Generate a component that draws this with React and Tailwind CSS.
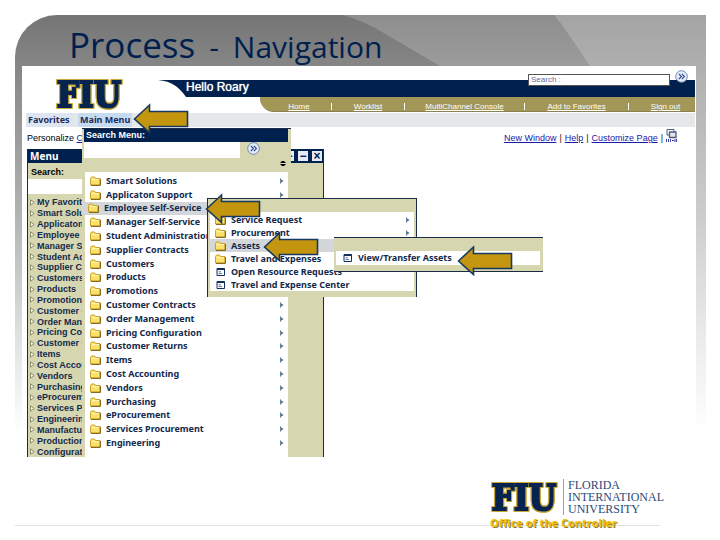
import React from 'react';
import clsx from 'clsx';

const mainMenu = [
  'Smart Solutions',
  'Applicaton Support',
  'Employee Self-Service',
  'Manager Self-Service',
  'Student Administration',
  'Supplier Contracts',
  'Customers',
  'Products',
  'Promotions',
  'Customer Contracts',
  'Order Management',
  'Pricing Configuration',
  'Customer Returns',
  'Items',
  'Cost Accounting',
  'Vendors',
  'Purchasing',
  'eProcurement',
  'Services Procurement',
  'Engineering',
];

const sideMenu = [
  'My Favorite',
  'Smart Solu',
  'Applicaton',
  'Employee S',
  'Manager S',
  'Student Ad',
  'Supplier Co',
  'Customers',
  'Products',
  'Promotions',
  'Customer C',
  'Order Man',
  'Pricing Cor',
  'Customer R',
  'Items',
  'Cost Accou',
  'Vendors',
  'Purchasing',
  'eProcurem',
  'Services P',
  'Engineerin',
  'Manufactu',
  'Production',
  'Configurati',
];

const selfService = [
  { label: 'Service Request', folder: true, more: true },
  { label: 'Procurement', folder: true, more: true },
  { label: 'Assets', folder: true, active: true },
  { label: 'Travel and Expenses', folder: true },
  { label: 'Open Resource Requests' },
  { label: 'Travel and Expense Center' },
];

const headerLinks = [
  { label: 'Home', width: 'w-[71px] pl-[7px]' },
  { label: 'Worklist', width: 'w-[73px]' },
  { label: 'MultiChannel Console', width: 'w-[120px]' },
  { label: 'Add to Favorites', width: 'w-[104px]' },
  { label: 'Sign out', width: 'flex-1 pl-[7px]' },
];

function FolderIcon() {
  return (
    <svg viewBox="0 0 11 10" className="w-[11px] h-[10px] shrink-0" aria-hidden="true">
      <path d="M0.5 2.5L1.5 1H4.5L5.5 2.5H10V9H0.5Z" fill="#fbe06a" stroke="#c9a227" strokeWidth="1" />
      <path d="M1 9.4H10.4V3" fill="none" stroke="#7d5f10" strokeWidth="1" />
      <path d="M1.5 3.6H9" stroke="#fff6bd" strokeWidth="1" />
    </svg>
  );
}

function PageIcon() {
  return (
    <svg viewBox="0 0 11 10" className="w-[11px] h-[10px] shrink-0" aria-hidden="true">
      <path d="M2 1.5H9.5V8.5H2Z" fill="#fff" stroke="#12305c" strokeWidth="1" />
      <path d="M2 2.2H9.5" stroke="#12305c" strokeWidth="1.6" />
      <path d="M3.5 4.8H6M3.5 6.6H7" stroke="#4a6791" strokeWidth="0.9" />
    </svg>
  );
}

function MoreArrow() {
  return (
    <svg viewBox="0 0 4 6" className="w-1 h-[6px] shrink-0" aria-hidden="true">
      <path d="M0.5 0V6M0.5 1.2L3.2 3L0.5 4.8Z" fill="#4f6f8c" stroke="#4f6f8c" strokeWidth="0.5" />
    </svg>
  );
}

function GoIcon() {
  return (
    <svg viewBox="0 0 13 13" className="w-[13px] h-[13px]" aria-hidden="true">
      <circle cx="6.5" cy="6.5" r="5.8" fill="#e4ecf8" stroke="#7188b5" strokeWidth="1" />
      <path d="M3.8 3.8L6.4 6.5L3.8 9.2M6.8 3.8L9.4 6.5L6.8 9.2" fill="none" stroke="#27448c" strokeWidth="1.1" />
    </svg>
  );
}

function PointerArrow({ className }) {
  return (
    <svg viewBox="0 0 56 31" className={clsx('absolute w-14 h-[31px] z-30', className)} aria-hidden="true">
      <path d="M1.5 16L16.5 2V8.5H54.5V23.5H16.5V29.5Z" fill="#c4950f" stroke="#163a5f" strokeWidth="1.6" />
    </svg>
  );
}

function FiuMark() {
  return (
    <svg
      viewBox="0 0 68 32"
      className="w-[68px] h-8 [filter:drop-shadow(1px_0_0_#c9a93a)_drop-shadow(-1px_0_0_#c9a93a)_drop-shadow(0_1px_0_#c9a93a)_drop-shadow(0_-1px_0_#c9a93a)]"
      role="img"
      aria-label="FIU"
    >
      <text
        x="34"
        y="29"
        fontFamily="'DejaVu Serif Condensed', 'DejaVu Serif', serif"
        fontWeight="700"
        fontSize="35"
        textAnchor="middle"
        fill="#06244f"
        stroke="#06244f"
        strokeWidth="2"
      >
        FIU
      </text>
    </svg>
  );
}

function Backdrop() {
  return (
    <svg
      viewBox="0 0 691 510"
      preserveAspectRatio="none"
      className="absolute inset-0 w-full h-full rounded-tl-[42px]"
      aria-hidden="true"
    >
      <defs>
        <linearGradient id="fade" x1="0" y1="0" x2="0" y2="1">
          <stop offset="0" stopColor="#757575" />
          <stop offset="0.1" stopColor="#868686" />
          <stop offset="0.4" stopColor="#b4b4b4" />
          <stop offset="0.65" stopColor="#e4e4e4" />
          <stop offset="0.82" stopColor="#ffffff" />
        </linearGradient>
      </defs>
      <rect width="691" height="510" fill="url(#fade)" />
      <path d="M328 0Q345 5 360 13L425 51L540 140H691V0Z" fill="#fff" fillOpacity="0.18" />
      <path d="M539 0Q546 8 552 17L575 51L640 140H691V0Z" fill="#fff" fillOpacity="0.2" />
      <path d="M681 140H691V510H681Z" fill="#fff" fillOpacity="0.34" />
    </svg>
  );
}

function MenuRow({ label, folder = true, more, className }) {
  return (
    <li className={clsx('flex items-center pr-1', className)}>
      {folder ? <FolderIcon /> : <PageIcon />}
      <a href="#" className="flex-1 ml-[5px] whitespace-nowrap">{label}</a>
      {more && <MoreArrow />}
    </li>
  );
}

function SiteHeader() {
  return (
    <header className="flex h-[47px] relative">
      <div className="w-[136px] shrink-0 pt-[12px] pl-[33px]">
        <FiuMark />
      </div>
      <div className="flex-1 min-w-0 pt-[14px] mr-px">
        <div className="flex h-[17px]">
          <svg viewBox="0 0 28 17" className="w-7 h-[17px]" aria-hidden="true">
            <path d="M0 0H28V17C22 8 14 1 0 0Z" fill="#00214d" />
          </svg>
          <p className="flex-1 bg-[#00214d] text-white text-[12px] leading-[14px] font-['Liberation_Sans',sans-serif] [text-shadow:0_0_1px_#fff]">
            Hello Roary
          </p>
        </div>
        <nav className="ml-[102px] h-[15px] pt-[6px] flex bg-[#a39758] border-b border-[#8a8052] rounded-bl-[14px] text-[8px] leading-[7px] text-white font-['Liberation_Sans',sans-serif]">
          {headerLinks.map((link, i) => (
            <div
              key={link.label}
              className={clsx('h-[7px] text-center whitespace-nowrap', link.width, i > 0 && 'border-l border-white')}
            >
              <a href="#" className="underline">{link.label}</a>
            </div>
          ))}
        </nav>
      </div>
      <form className="absolute right-[8px] top-[4px] flex items-start gap-[5px]">
        <input
          aria-label="Search"
          placeholder="Search :"
          className="w-[142px] h-3 mt-1 px-[2px] bg-white border border-[#555] text-[8px] placeholder:text-[#66699a] font-['Liberation_Sans',sans-serif]"
        />
        <button type="button" aria-label="Go"><GoIcon /></button>
      </form>
    </header>
  );
}

function SidePanel() {
  return (
    <section className="ml-[5px] w-[297px] border-x border-[#1c2b45] bg-[#d6d6b0] font-['Liberation_Sans',sans-serif] font-bold">
      <div className="flex items-center justify-between h-[14px] bg-[#00214d] pl-[2px] pr-px">
        <h2 className="text-[10px] leading-3 text-white font-['Noto_Sans',sans-serif]">Menu</h2>
        <div className="flex gap-1">
          {['−', '−', '×'].map((sign, i) => (
            <button
              key={i}
              type="button"
              aria-label={['Restore', 'Minimize', 'Close'][i]}
              className="w-[10px] h-[10px] bg-[#e6ebf4] text-[#00214d] text-[12px] leading-[9px]"
            >
              {sign}
            </button>
          ))}
        </div>
      </div>
      <label htmlFor="menu-search" className="block pl-[3px] h-4 text-[9px] leading-[18px] text-black">Search:</label>
      <input id="menu-search" className="block w-[200px] h-[15px] bg-white" />
      <ul className="grid auto-rows-fr mt-[3px] h-[260px] text-[9px] leading-[10px] text-[#14294b]">
        {sideMenu.map((item) => (
          <li key={item} className="flex items-center pl-[2px]">
            <svg viewBox="0 0 5 7" className="w-[5px] h-[7px] mr-[2px]" aria-hidden="true">
              <path d="M0.5 0.8V6.2L4.2 3.5Z" fill="#f1f1dd" stroke="#6d6d52" strokeWidth="0.7" />
            </svg>
            <a href="#" className="whitespace-nowrap">{item}</a>
          </li>
        ))}
      </ul>
    </section>
  );
}

function MainMenuPopup() {
  return (
    <div className="absolute left-[60px] top-[62px] w-[209px] z-10">
      <div className="bg-[#d6d6b0] border-t border-[#1c2b45] pl-[2px] pr-[3px] h-[44px] relative">
        <label htmlFor="main-search" className="block bg-[#00214d] text-white text-[9px] leading-[13px] h-[13px] pl-[2px] font-bold font-['Liberation_Sans',sans-serif]">
          Search Menu:
        </label>
        <div className="flex items-start gap-[7px]">
          <input id="main-search" className="w-[156px] h-4 bg-white" />
          <button type="button" aria-label="Search menu"><GoIcon /></button>
        </div>
        <svg viewBox="0 0 6 5" className="absolute right-[5px] bottom-[6px] w-[6px] h-[5px]" aria-hidden="true">
          <path d="M0 2L2 0H4L6 2ZM0 3L2 5H4L6 3Z" fill="#000" />
        </svg>
      </div>
      <ul className="mr-[3px] pt-[2px] pb-[7px] bg-white border-l-[3px] border-[#d6d6b0] grid auto-rows-fr h-[285px] text-[9px] leading-3 font-bold text-[#14294b] font-['Noto_Sans',sans-serif]">
        {mainMenu.map((item) => (
          <MenuRow
            key={item}
            label={item}
            more
            className={item === 'Employee Self-Service' ? '-ml-[3px] pl-[6px] bg-[#d3d7d9]' : 'pl-[5px]'}
          />
        ))}
      </ul>
    </div>
  );
}

function SelfServicePopup() {
  return (
    <div className="absolute left-[185px] top-[132px] w-[210px] z-20 bg-[#d6d6b0] border-t border-x border-[#1c2b45] pt-[13px] pb-[6px] px-[2px]">
      <ul className="bg-white grid auto-rows-fr h-[79px] pt-px text-[9px] leading-3 font-bold text-[#14294b] font-['Noto_Sans',sans-serif]">
        {selfService.map(({ label, folder, more, active }) => (
          <MenuRow
            key={label}
            label={label}
            folder={Boolean(folder)}
            more={more}
            className={clsx('pl-[5px]', active && 'bg-[#d3d7d9]')}
          />
        ))}
      </ul>
    </div>
  );
}

function AssetsPopup() {
  return (
    <div className="absolute left-[312px] top-[171px] w-[209px] z-20 bg-[#d6d6b0] border-y border-[#1c2b45] pt-[13px] pb-[6px] pl-[2px] pr-[3px]">
      <ul className="bg-white grid h-[14px] text-[9px] leading-3 font-bold text-[#14294b] font-['Noto_Sans',sans-serif]">
        <MenuRow label="View/Transfer Assets" folder={false} className="pl-[6px]" />
      </ul>
    </div>
  );
}

export default function App() {
  return (
    <main className="min-h-screen bg-white pt-[15px] pl-[15px] pr-[14px]">
      <div className="relative h-[510px]">
        <Backdrop />
        <h1 className="relative h-[51px] pl-[54px] flex items-baseline gap-[14px] whitespace-nowrap leading-[60px] text-[#001f4e] font-['Open_Sans',sans-serif] text-[35px]">
          Process <span className="text-[30px]">-</span> <span className="text-[30px]">Navigation</span>
        </h1>

        <div className="relative ml-[7px] mr-[10px] bg-white">
          <SiteHeader />
          <nav className="ml-[4px] mr-px h-[14px] flex items-center bg-[#e6e7e9] text-[9px] leading-[14px] font-bold text-[#1b2c5b] font-['Noto_Sans',sans-serif]">
            <a href="#" className="bg-[#dde5f1] px-[2px] w-[48px]">Favorites</a>
            <a href="#" className="bg-[#c6daf0] px-[2px] ml-1 whitespace-nowrap">Main Menu</a>
          </nav>
          <div className="h-[22px] pl-[5px] pr-[19px] flex items-start justify-between text-[9px] leading-[22px] font-['Liberation_Sans',sans-serif]">
            <p className="text-black">
              Personalize <a href="#" className="text-[#1a1aa8] underline">C</a>
            </p>
            <div className="flex gap-[3px] text-[#222]">
              <a href="#" className="text-[#1a1aa8] underline">New Window</a>|
              <a href="#" className="text-[#1a1aa8] underline">Help</a>|
              <a href="#" className="text-[#1a1aa8] underline">Customize Page</a>|
              <a href="#" aria-label="Copy page address" className="pt-[2px]">
                <svg viewBox="0 0 11 13" className="w-[11px] h-[13px]" aria-hidden="true">
                  <path d="M1 0.5H8V6H1Z" fill="#fff" stroke="#4d5b7c" />
                  <path d="M3.5 3H10V8.5H3.5Z" fill="#dfe5f0" stroke="#4d5b7c" strokeWidth="1.3" />
                  <path d="M0.5 10V13M2.5 10V13M4.5 10V13M6 11.5H8M9 10V13M10.5 10V13" stroke="#2b2ba0" strokeWidth="0.9" />
                </svg>
              </a>
            </div>
          </div>
          <SidePanel />
          <MainMenuPopup />
          <SelfServicePopup />
          <AssetsPopup />
          <PointerArrow className="left-[111px] top-[37px]" />
          <PointerArrow className="left-[183px] top-[127px]" />
          <PointerArrow className="left-[241px] top-[165px]" />
          <PointerArrow className="left-[435px] top-[179px]" />
        </div>

        <footer className="relative mt-[22px] mr-[42px] flex justify-end">
          <div>
            <div className="flex items-center gap-[5px]">
              <FiuMark />
              <div className="pl-1 border-l border-[#b8a25a] text-[12px] leading-3 text-[#2c4a78] font-['Liberation_Serif',serif]">
                <p>FLORIDA</p>
                <p>INTERNATIONAL</p>
                <p>UNIVERSITY</p>
              </div>
            </div>
            <p className="text-[11px] leading-4 text-[#f4bf00] font-bold whitespace-nowrap font-['Open_Sans',sans-serif] [text-shadow:1px_1px_0_#8a7a3a]">
              Office of the Controller
            </p>
          </div>
        </footer>
      </div>
      <hr className="mr-[46px] border-[#e2e2e2]" />
    </main>
  );
}
